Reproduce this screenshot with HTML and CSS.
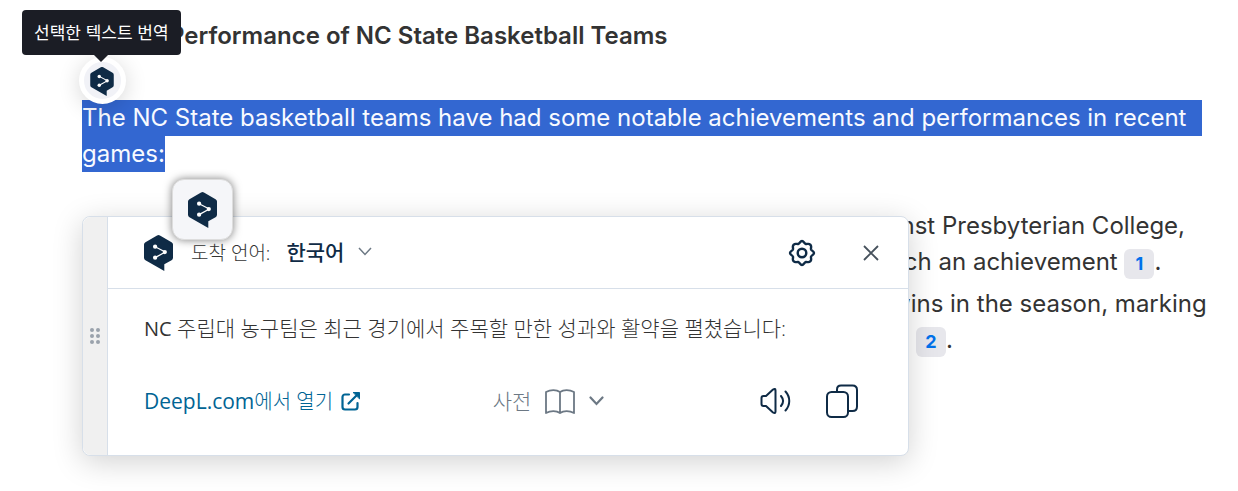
FILE: index.html
```html
<!DOCTYPE html>
<html lang="ko">
<head>
<meta charset="utf-8">
<meta name="viewport" content="width=device-width, initial-scale=1">
<title>NC State Basketball</title>
<link rel="stylesheet" href="styles.css">
</head>
<body>
<svg class="defs" aria-hidden="true">
  <symbol id="logo" viewBox="0 0 30 37">
    <path fill="#0f2b46" d="M13.5.4a3 3 0 0 1 3 0l12 6.900A2.900 2.900 0 0 1 30 9.800v13.600a2.900 2.900 0 0 1-1.500 2.500L21 30.200V37L1.500 25.900A2.900 2.900 0 0 1 0 23.400V9.800a2.900 2.900 0 0 1 1.500-2.500z"/>
    <path stroke="#fff" stroke-width="1.300" fill="none" d="M11.500 12l10.500 5.500-10.500 5.800"/>
    <g fill="#fff"><circle cx="11.500" cy="12" r="2.200"/><circle cx="21.500" cy="17.500" r="2.200"/><circle cx="11.500" cy="23.300" r="2.200"/></g>
  </symbol>
</svg>
<main class="page" lang="en">
  <h2 class="title">Performance of NC State Basketball Teams</h2>
  <p class="intro"><mark class="picked">The NC State basketball teams have had some notable achievements and performances in recent</mark><mark class="picked last">games:</mark></p>
  <ul class="facts">
    <li><span class="line first">against Presbyterian College,</span><span class="line second">such an achievement <a class="cite" href="#s1">1</a>.</span></li>
    <li><span class="line third">wins in the season, marking</span><span class="line fourth"><a class="cite" href="#s2">2</a>.</span></li>
  </ul>
</main>

<section class="popup" aria-label="DeepL">
  <div class="grip"><svg width="10" height="16" viewBox="0 0 10 16" fill="#9aa2ac"><circle cx="2" cy="2" r="2"/><circle cx="8" cy="2" r="2"/><circle cx="2" cy="8" r="2"/><circle cx="8" cy="8" r="2"/><circle cx="2" cy="14" r="2"/><circle cx="8" cy="14" r="2"/></svg></div>
  <div class="panel">
    <header class="head">
      <svg class="brand" width="29" height="36"><use href="#logo"/></svg>
      <span class="label">도착 언어:</span>
      <button class="lang" type="button">한국어 <svg width="14" height="9" viewBox="0 0 14 9" fill="none" stroke="#6c7884" stroke-width="1.500"><path d="M1 1l6 6.500L13 1"/></svg></button>
      <button class="icon settings" type="button" aria-label="설정"><svg width="28" height="28" viewBox="0 0 28 28" fill="none" stroke="#0f2b46" stroke-width="2.400" stroke-linejoin="round"><circle cx="14" cy="14" r="4.300"/><path d="M14 2C15.800 2 16.200 4.600 17.800 5C19.500 5.300 20.900 4 22.300 5.700C24 7.100 22.700 8.500 23 10.200C23.400 11.800 26 12.200 26 14C26 15.800 23.400 16.200 23 17.800C22.700 19.500 24 20.900 22.300 22.300C20.900 24 19.500 22.700 17.800 23C16.200 23.400 15.800 26 14 26C12.200 26 11.800 23.400 10.200 23C8.500 22.700 7.100 24 5.700 22.300C4 20.900 5.300 19.500 5 17.800C4.600 16.200 2 15.800 2 14C2 12.200 4.600 11.800 5 10.200C5.300 8.500 4 7.100 5.700 5.700C7.100 4 8.500 5.300 10.200 5C11.800 4.600 12.200 2 14 2Z"/></svg></button>
      <button class="icon" type="button" aria-label="닫기"><svg width="16" height="16" viewBox="0 0 16 16" fill="none" stroke="#46515c" stroke-width="1.800"><path d="M1 1l14 14M15 1L1 15"/></svg></button>
    </header>
    <div class="body">
      <p class="result"><span class="latin">NC</span> 주립대 농구팀은 최근 경기에서 주목할 만한 성과와 활약을 펼쳤습니다:</p>
      <footer class="actions">
        <a class="open" href="#deepl"><span><span class="site">DeepL.com</span>에서 열기</span> <svg width="20" height="20" viewBox="0 0 20 20" fill="none" stroke="#006494" stroke-width="2.200" stroke-linecap="round" stroke-linejoin="round"><path d="M8 3.500H4a2.500 2.500 0 0 0-2.500 2.500v10A2.500 2.500 0 0 0 4 18.500h10a2.500 2.500 0 0 0 2.500-2.500v-4M7.500 12.500L17.500 2.500"/><path d="M12.500 1.500H18.500V7.500z" fill="#006494" stroke-width="1"/></svg></a>
        <button class="dict" type="button">사전
          <svg width="30" height="25" viewBox="0 0 30 25" fill="none" stroke="#6c7884" stroke-width="1.800" stroke-linejoin="round"><path d="M15 3C11.500.5 5.500.5 1 3v21c4.500-2.500 10.500-2.500 14 0 3.500-2.500 9.500-2.500 14 0V3c-4.500-2.500-10.500-2.500-14 0zM15 3v21"/></svg>
          <svg width="15" height="10" viewBox="0 0 15 10" fill="none" stroke="#6c7884" stroke-width="2.200" stroke-linecap="round"><path d="M1.500 1.500l6 6.500 6-6.500"/></svg></button>
        <button class="icon speak" type="button" aria-label="듣기"><svg width="31" height="28" viewBox="0 0 31 28" fill="none" stroke="#0f2b46" stroke-width="2" stroke-linecap="round" stroke-linejoin="round"><path d="M1.500 11q0-2 2-2H6l7-6.500q2.500-1.500 2.500 1v21q0 2.500-2.500 1L6 19H3.500q-2 0-2-2zM21 9c2.500 3 2.500 7 0 10M25.500 4.500c5 5.500 5 13.500 0 19"/></svg></button>
        <button class="icon" type="button" aria-label="복사"><svg width="32" height="34" viewBox="0 0 32 34" fill="none" stroke="#0f2b46" stroke-width="2" stroke-linecap="round"><rect x="1" y="8" width="21" height="25" rx="4.500"/><path d="M11 7V5.500Q11 1.500 15 1.500h11.500Q31 1.500 31 6v16.500q0 4.500-4.500 4.500H23"/></svg></button>
      </footer>
    </div>
  </div>
</section>

<button class="tile" type="button" aria-label="DeepL 번역"><svg width="29" height="36"><use href="#logo"/></svg></button>
<button class="bubble" type="button" aria-labelledby="tip"><svg width="24" height="29"><use href="#logo"/></svg></button>
<div class="tip" id="tip" role="tooltip">선택한 텍스트 번역</div>
</body>
</html>
```
FILE: styles.css
```css
* { box-sizing: border-box; }
body {
  margin: 0;
  position: relative;
  min-height: 100vh;
  background: #fff;
  color: #333;
  font-family: Inter, "Noto Sans CJK KR", sans-serif;
}
.defs { position: absolute; width: 0; height: 0; }
button { border: 0; padding: 0; background: none; font: inherit; color: inherit; display: flex; align-items: center; cursor: pointer; }
svg { display: block; flex: none; }
a { text-decoration: none; }

.page { padding: 18px 24px 120px 82px; font-size: 24px; line-height: 36px; }
.title { margin: 0 0 46px; padding-left: 87px; font-size: 24px; line-height: 36px; font-weight: 600; }
.intro { margin: 0 0 36px; display: flex; flex-direction: column; align-items: flex-start; }
.picked { background: #3367d1; color: #f8faff; padding-right: 16px; white-space: nowrap; }
.picked.last { padding-right: 0; }
.facts { margin: 0; padding: 0; list-style: none; display: grid; gap: 6px; }
.line { display: block; white-space: nowrap; }
.first { padding-left: 771px; }
.second { padding-left: 795px; }
.third { padding-left: 809px; }
.fourth { padding-left: 834px; }
.cite {
  display: inline-block;
  width: 30px;
  border-radius: 6px;
  background: #e7e7ec;
  color: #0071eb;
  font-size: 18px;
  line-height: 30px;
  font-weight: 700;
  text-align: center;
}

.popup {
  position: absolute;
  top: 216px;
  left: 82px;
  width: 827px;
  display: flex;
  border: 1px solid #d7dfe9;
  border-radius: 8px;
  background: #fff;
  box-shadow: 0 6px 30px rgba(0, 0, 0, .18);
  font-family: "Open Sans", "Noto Sans CJK KR", sans-serif;
  font-size: 21px;
  line-height: 30px;
}
.grip {
  width: 25px;
  display: flex;
  align-items: center;
  justify-content: center;
  border-right: 1px solid #d7dfe9;
  border-radius: 8px 0 0 8px;
  background: #f0f0f0;
}
.panel { flex: 1; }
.latin { font-size: 20px; font-weight: 400; }
.head { display: flex; align-items: center; height: 72px; padding: 0 29px 0 36px; border-bottom: 1px solid #d7dfe9; }
.label { margin-left: 18px; font-weight: 300; font-size: 19px; }
.lang { margin-left: 16px; padding-bottom: 2px; gap: 14px; color: #0f2b46; font-weight: 500; }
.settings { margin-left: auto; margin-right: 47px; }
.body { padding: 24px 50px 36px 36px; }
.result { margin: 0; font-weight: 300; }
.actions { display: flex; align-items: center; margin-top: 39px; height: 36px; }
.open { display: flex; align-items: center; gap: 8px; color: #006494; font-size: 20px; font-weight: 300; }
.site { font-size: 21px; font-weight: 400; }
.dict { margin: 0 auto; padding: 0 24px 0 0; gap: 14px; color: #6c7884; font-weight: 300; }
.speak { margin-right: 35px; }

.tile {
  position: absolute;
  top: 179px;
  left: 172px;
  width: 61px;
  height: 61px;
  justify-content: center;
  border: 1px solid #ddd;
  border-radius: 12px;
  background: #f5f6f9;
  box-shadow: 0 0 8px rgba(0, 0, 0, .5);
}
.bubble {
  position: absolute;
  top: 57px;
  left: 79px;
  width: 47px;
  height: 47px;
  padding: 2px 1px 0 0;
  justify-content: center;
  border: 5px solid #fff;
  border-radius: 50%;
  background: #f1f2f7;
  box-shadow: 0 4px 22px rgba(0, 0, 0, .16);
}
.tip {
  position: absolute;
  top: 10px;
  left: 22px;
  padding: 9px 12px 10px;
  border-radius: 4px;
  background: #1b1d25;
  color: #fff;
  font: 17px/26px "Noto Sans CJK KR", sans-serif;
  white-space: nowrap;
}
.tip::after {
  content: "";
  position: absolute;
  top: 100%;
  left: 50%;
  margin-left: -7px;
  border: 7px solid transparent;
  border-top-color: #1b1d25;
  border-bottom: 0;
}
```
